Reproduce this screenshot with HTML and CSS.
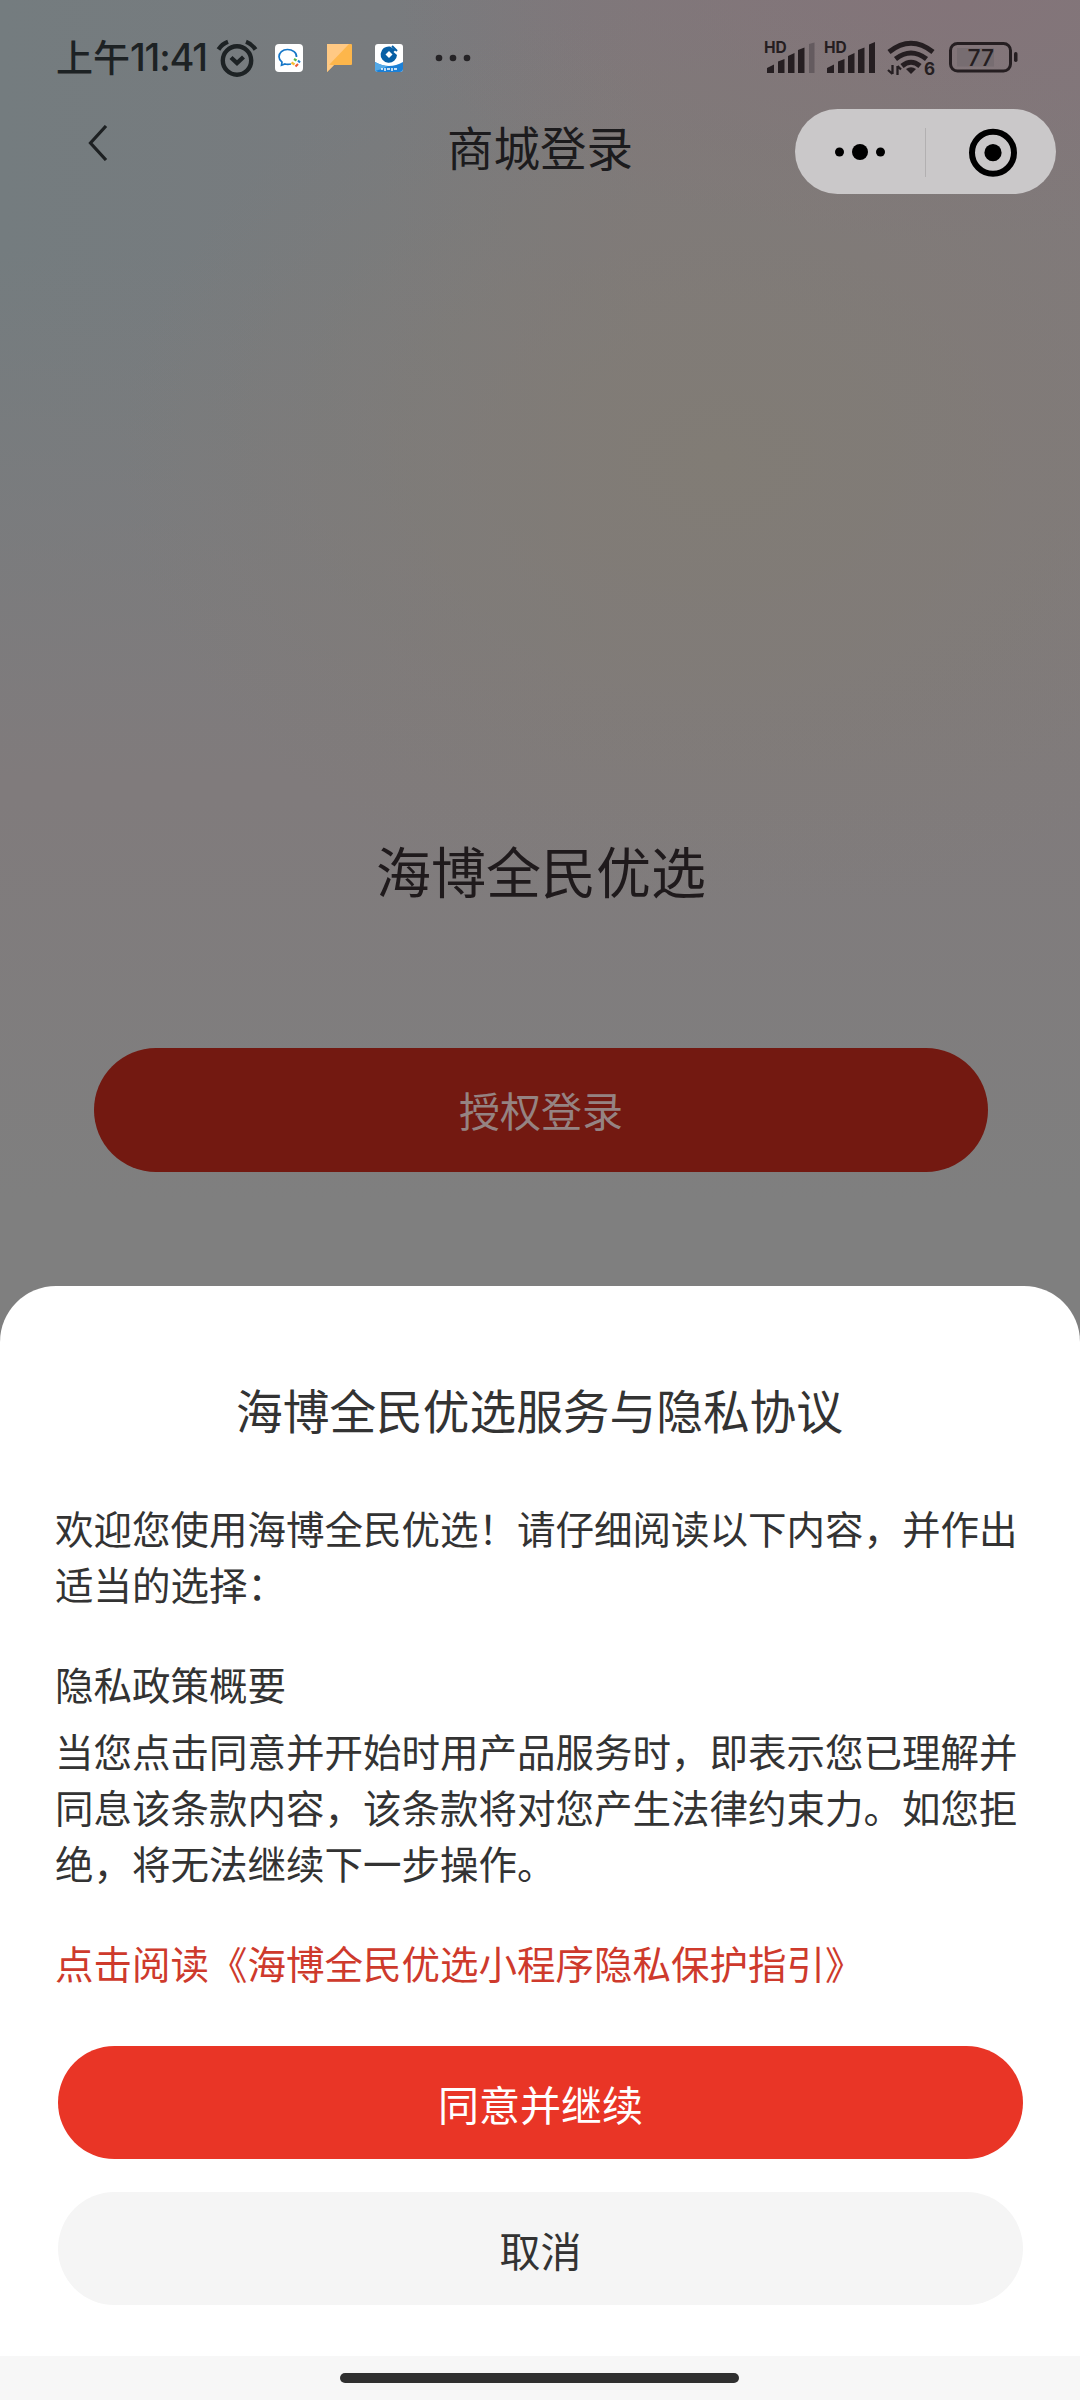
FILE: index.html
```html
<!DOCTYPE html>
<html lang="zh-CN">
<head>
  <meta charset="UTF-8" />
  <meta name="viewport" content="width=device-width, initial-scale=1.0" />
  <title>商城登录</title>
  <link rel="stylesheet" href="styles.css">
</head>
<body>
  <div class="screen">
    <div class="status-bar">
      <span class="time-cn">上午</span><span class="time">11:41</span>
      <svg class="alarm" width="42" height="40" viewBox="0 0 42 40" fill="none" stroke="#1d2224" stroke-width="4.4">
        <circle cx="21" cy="22.5" r="14.2" />
        <path d="M2.5 11.5 Q6 6 12 3.8M39.5 11.5 Q36 6 30 3.8" />
        <path d="M15 19.5 L21 25 L27.5 19" />
      </svg>
      <svg class="app wecom" width="28" height="28" viewBox="0 0 28 28">
        <rect width="28" height="28" rx="4" fill="#fff" />
        <path d="M21.500 13 C22 8.500 17.500 5.500 12.500 5.500 C7.500 5.500 4 8.800 4 12.800 C4 15.200 5 16.600 7 18.200 L6.500 21.300 L10 20 C12 20.700 14 20.500 16 20" fill="none" stroke="#1677c8" stroke-width="1.700" />
        <g fill="none" stroke-width="2.200">
          <path d="M19 15 L21.500 16.500" stroke="#58b947" />
          <path d="M23 16.500 L25 18.500" stroke="#2583cf" />
          <path d="M23 20 L20.500 22.500" stroke="#ec5b34" />
          <path d="M19.500 20.500 L16.500 18.500" stroke="#f9bd30" />
        </g>
      </svg>
      <svg class="app note" width="26" height="28" viewBox="0 0 26 28">
        <path d="M0 0 H24 Q25 0 25 1 V20 Q25 21 24 21 H7 L0 28Z" fill="#fdb64b" />
        <path d="M0 0 H22 L0 23Z" fill="#ffc984" />
        <path d="M0 20 L4 21 H7 L0 28Z" fill="#ffc984" />
      </svg>
      <svg class="app bank" width="28" height="28" viewBox="0 0 28 28">
        <rect width="28" height="28" rx="3" fill="#fff" />
        <path d="M0 18 Q14 26 28 18 V25 Q28 28 25 28 H3 Q0 28 0 25Z" fill="#1c80d6" />
        <path d="M0 18 Q8 22 13 22 Q6 26 0 27Z" fill="#54a9e7" />
        <path d="M15 2.500 A8.200 8.200 0 1 0 22 11 L18.500 8 L20.500 6Z" fill="#075fa5" />
        <path d="M17 2 L22 7" stroke="#075fa5" stroke-width="2" />
        <path d="M14 7 L17.500 10.500 L14 14 L10.500 10.500Z" fill="#fff" />
        <path d="M6 25 H8M10 24 V27M12 25 H15M17 24 V27M19 25 H22" stroke="#fff" stroke-width="1.400" />
      </svg>
      <svg class="more" width="36" height="8" viewBox="0 0 36 8" fill="#252326">
        <circle cx="4" cy="4" r="3.300" /><circle cx="18" cy="4" r="3.300" /><circle cx="32" cy="4" r="3.300" />
      </svg>

      <!-- signal, wifi, battery -->
      <svg class="signals" width="256" height="44" viewBox="764 36 256 44" fill="#251e21">
        <g class="hd">
          <text x="764" y="52.500">HD</text>
          <text x="824" y="52.500">HD</text>
        </g>
        <path d="M767 73 V68 L774 64.500 V73ZM778 73 V61.500 L784.500 59 V73ZM788 73 V56 L794.500 53 V73ZM798 73 V50 L804.500 47.500 V73Z" />
        <path d="M809 73 V44 L814.500 42.500 V73Z" fill="#645b5f" />
        <path d="M827 73 V68 L834 64.500 V73ZM838 73 V61.500 L844.500 59 V73ZM848 73 V56 L854.500 53 V73ZM858 73 V50 L864.500 47.500 V73ZM869 73 V44.500 L875 42 V73Z" />
        <g fill="none" stroke="#251e21" stroke-width="5">
          <path d="M889 52 Q911 34.500 933 52" />
          <path d="M895.500 59 Q911 47 926.500 59" />
          <path d="M902 66 Q911 58.500 920 66" />
          <path d="M892.500 65 V74M888 70 L892.500 74M897.500 75 V66M897.500 66 L901 69.500" stroke-width="2.300" />
          <rect x="950.500" y="43.500" width="60" height="27.500" rx="7" stroke-width="3" />
        </g>
        <path d="M906 69 Q911 65.500 916 69 L911 74Z" />
        <text class="wifi-gen" x="924" y="75">6</text>
        <rect x="957" y="48" width="37" height="18.500" fill="#776d71" />
        <rect x="1014" y="52" width="3.500" height="10" rx="1.700" />
        <text class="battery" x="967.500" y="66">77</text>
      </svg>
    </div>

    <div class="nav-bar">
      <svg class="back" width="20" height="36" viewBox="0 0 20 36" fill="none" stroke="#1d2022" stroke-width="3.200">
        <path d="M18 1 L2.500 18 L18 35" />
      </svg>
      <h1 class="nav-title">商城登录</h1>
      <svg class="capsule" width="261" height="85" viewBox="0 0 261 85">
        <rect width="261" height="85" rx="42.500" fill="#cac8c9" />
        <circle cx="44.500" cy="43" r="4.500" /><circle cx="65" cy="43" r="8" /><circle cx="85.500" cy="43" r="4.500" />
        <path d="M130.500 19 V68" stroke="#b2b0b1" stroke-width="1" />
        <circle cx="198" cy="43.700" r="21" fill="none" stroke="#000" stroke-width="6" />
        <circle cx="198" cy="43.700" r="8.600" />
      </svg>
    </div>

    <div class="login">
      <h2 class="shop-name">海博全民优选</h2>
      <button class="btn login-btn">授权登录</button>
    </div>

    <div class="sheet">
      <h3 class="sheet-title">海博全民优选服务与隐私协议</h3>
      <p class="intro">欢迎您使用海博全民优选！请仔细阅读以下内容，并作出<br>适当的选择：</p>
      <p class="subtitle">隐私政策概要</p>
      <p class="policy">当您点击同意并开始时用产品服务时，即表示您已理解并<br>同息该条款内容，该条款将对您产生法律约束力。如您拒<br>绝，将无法继续下一步操作。</p>
      <a class="link">点击阅读《海博全民优选小程序隐私保护指引》</a>
      <button class="btn agree">同意并继续</button>
      <button class="btn cancel">取消</button>
    </div>

    <div class="home-area"><div class="home-bar"></div></div>
  </div>
</body>
</html>
```
FILE: styles.css
```css
* {
  box-sizing: border-box;
}

body {
  margin: 0;
  font-family: "Noto Sans CJK SC", sans-serif;
  color: #333;
}

.screen {
  display: flex;
  flex-direction: column;
  width: 1080px;
  height: 2400px;
  overflow: hidden;
  background:
    linear-gradient(180deg, rgba(127,127,127,0) 800px, #7f7f7f 1200px),
    radial-gradient(ellipse 600px 460px at 720px 460px, #817c75 0%, rgba(129,124,117,0) 100%),
    radial-gradient(ellipse 560px 240px at 960px 0, #837479 0%, rgba(131,116,121,0) 100%),
    linear-gradient(180deg, rgba(128,123,124,0) 250px, #807b7c 780px),
    linear-gradient(90deg, #747c7f 0, #787b7e 380px, #7e797b 640px, #80797b 100%);
}

h1, h2, h3, p {
  margin: 0;
  font-weight: 400;
}

/* status bar */
.status-bar {
  display: flex;
  align-items: center;
  height: 109px;
  padding: 6px 60px 0 56px;
  color: #1d2224;
}

.time-cn {
  margin-top: -4px;
  font-size: 37px;
  line-height: 40px;
  font-weight: 500;
}

.time {
  width: 86px;
  margin-top: -2px;
  font-family: Inter, sans-serif;
  font-size: 38px;
  line-height: 40px;
  font-weight: 500;
  letter-spacing: -1.2px;
  white-space: nowrap;
}

.alarm {
  flex: none;
}

.wecom {
  margin-left: 17px;
}

.note {
  margin-left: 24px;
}

.bank {
  margin-left: 22px;
}

.more {
  margin-left: 32px;
}

.signals {
  margin-left: auto;
}

.hd text {
  font: 700 15.5px Inter, sans-serif;
}

.wifi-gen {
  font: 700 17px Inter, sans-serif;
}

.battery {
  font: 500 23px Inter, sans-serif;
}

/* nav bar */
.nav-bar {
  display: grid;
  grid-template-columns: 1fr auto 1fr;
  align-items: center;
  height: 85px;
  padding: 0 24px 0 88px;
}

.back {
  margin-bottom: 17px;
}

.nav-title {
  margin: -12px 32px 0 -32px;
  font-size: 46.5px;
  line-height: 60px;
  color: #1c1b1d;
}

.capsule {
  justify-self: end;
}

/* login */
.login {
  display: flex;
  flex-direction: column;
  align-items: center;
  height: 1092px;
  padding: 635px 0 0 2px;
}

.shop-name {
  font-size: 55px;
  line-height: 80px;
  color: #1f1a1c;
}

.btn {
  border: none;
  padding: 0;
  border-radius: 62px;
  font-family: inherit;
  font-size: 41px;
}

.login-btn {
  width: 894px;
  height: 124px;
  margin-top: 139px;
  padding-bottom: 3px;
  background: #731911;
  color: #958382;
}

/* privacy sheet */
.sheet {
  display: flex;
  flex-direction: column;
  height: 1070px;
  padding: 93px 56px 0 55px;
  border-radius: 56px 56px 0 0;
  background: #fff;
  font-size: 38.5px;
  line-height: 56px;
  white-space: nowrap;
}

.sheet-title {
  font-size: 46.7px;
  line-height: 60px;
  text-align: center;
}

.intro {
  margin-top: 60px;
}

.subtitle {
  margin-top: 44px;
}

.policy {
  margin-top: 11px;
}

.link {
  margin-top: 44px;
  color: #ce3a2c;
}

.agree {
  height: 113px;
  margin: 56px 1px 0 3px;
  background: #e93526;
  color: #fff;
}

.cancel {
  height: 113px;
  margin: 33px 1px 0 3px;
  background: #f5f5f5;
  color: #333;
}

.home-area {
  display: flex;
  justify-content: center;
  height: 44px;
  padding: 17px 1px 0 0;
  background: #f7f7f7;
}

.home-bar {
  width: 399px;
  height: 10px;
  border-radius: 5px;
  background: #303030;
}
```
